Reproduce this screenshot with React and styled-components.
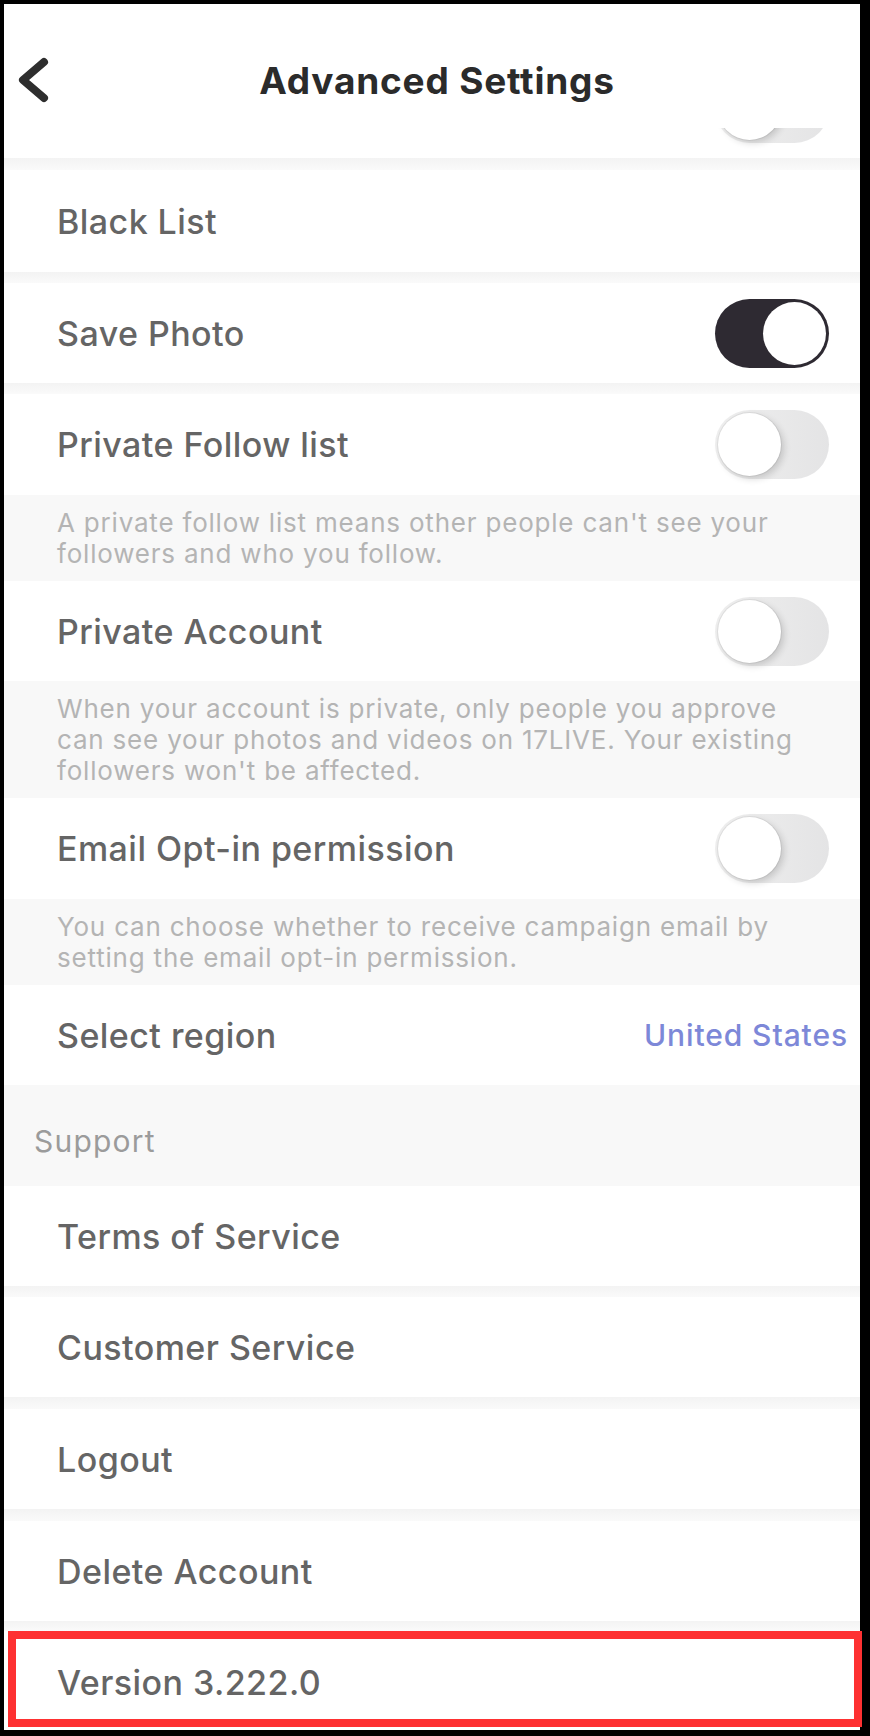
import React from "react"
import styled, { createGlobalStyle } from "styled-components"

const GlobalStyle = createGlobalStyle`
  html, body {
    margin: 0;
    padding: 0;
    background: #000;
  }
  body {
    font-family: Inter, "Noto Sans", "Liberation Sans", sans-serif;
    -webkit-font-smoothing: antialiased;
  }
`;

const privateFollowNote = [
  "A private follow list means other people can't see your",
  "followers and who you follow.",
];

const privateAccountNote = [
  "When your account is private, only people you approve",
  "can see your photos and videos on 17LIVE. Your existing",
  "followers won't be affected.",
];

const emailNote = [
  "You can choose whether to receive campaign email by",
  "setting the email opt-in permission.",
];

function Toggle({ on }) {
  return (
    <Track $on={on} role="switch" aria-checked={on}>
      <Thumb $on={on} />
    </Track>
  );
}

function Note({ lines }) {
  return (
    <NoteBox>
      {lines.map((line, i) => (
        <NoteLine key={i}>{line}</NoteLine>
      ))}
    </NoteBox>
  );
}

export default function App() {
  return (
    <>
      <GlobalStyle />
      <Frame>
        <Screen>
          <Header>
            <BackButton aria-label="Back">
              <svg width="40" height="52" viewBox="0 0 40 52">
                <path
                  d="M30 8 L9 26 L30 44"
                  fill="none"
                  stroke="#2e2e2e"
                  strokeWidth="8"
                  strokeLinecap="round"
                  strokeLinejoin="round"
                />
              </svg>
            </BackButton>
            <Title>Advanced Settings</Title>
            <span />
          </Header>

          <ScrollArea>
            <ScrollContent $offset={70}>
              <Row $h={100}>
                <span />
                <Toggle on={false} />
              </Row>
              <Gap $h={12} />
              <Row $h={102}>
                <Label>Black List</Label>
              </Row>
              <Gap $h={11} />
              <Row $h={100}>
                <Label>Save Photo</Label>
                <Toggle on />
              </Row>
              <Gap $h={11} />
              <Row $h={101}>
                <Label>Private Follow list</Label>
                <Toggle on={false} />
              </Row>
              <Note lines={privateFollowNote} />
              <Row $h={100}>
                <Label>Private Account</Label>
                <Toggle on={false} />
              </Row>
              <Note lines={privateAccountNote} />
              <Row $h={101}>
                <Label>Email Opt-in permission</Label>
                <Toggle on={false} />
              </Row>
              <Note lines={emailNote} />
              <Row $h={100}>
                <Label>Select region</Label>
                <Value>United States</Value>
              </Row>
              <SectionHeader>Support</SectionHeader>
              <Row $h={100}>
                <Label>Terms of Service</Label>
              </Row>
              <Gap $h={11} />
              <Row $h={100}>
                <Label>Customer Service</Label>
              </Row>
              <Gap $h={12} />
              <Row $h={100}>
                <Label>Logout</Label>
              </Row>
              <Gap $h={12} />
              <Row $h={100}>
                <Label>Delete Account</Label>
              </Row>
              <Gap $h={10} />
              <HighlightRow $h={98}>
                <Label>Version 3.222.0</Label>
              </HighlightRow>
            </ScrollContent>
          </ScrollArea>
        </Screen>
      </Frame>
    </>
  );
}

const Frame = styled.div`
  width: 870px;
  height: 1736px;
  box-sizing: border-box;
  padding: 4px 10px 6px 4px;
  background: #000;
`;

const Screen = styled.div`
  height: 100%;
  display: flex;
  flex-direction: column;
  background: #fff;
`;

const Header = styled.div`
  flex-shrink: 0;
  height: 124px;
  box-sizing: border-box;
  padding: 28px 0 0 10px;
  display: grid;
  grid-template-columns: 1fr auto 1fr;
  align-items: center;
  background: #fff;
`;

const BackButton = styled.button`
  width: 40px;
  height: 52px;
  padding: 0;
  border: none;
  background: transparent;
  display: flex;
  cursor: pointer;
`;

const Title = styled.h1`
  margin: 0;
  font-size: 37px;
  font-weight: 700;
  letter-spacing: 0.8px;
  color: #2b2b2b;
`;

const ScrollArea = styled.div`
  flex: 1;
  min-height: 0;
  clip-path: inset(0 -12px 0 0);
`;

const ScrollContent = styled.div`
  margin-top: -${(p) => p.$offset}px;
  display: flex;
  flex-direction: column;
`;

const Row = styled.div`
  position: relative;
  flex-shrink: 0;
  height: ${(p) => p.$h || 100}px;
  box-sizing: border-box;
  padding: 0 12px 0 53px;
  display: flex;
  align-items: center;
  justify-content: space-between;
  background: #fff;
`;

const HighlightRow = styled(Row)`
  padding-top: 4px;

  &::after {
    content: "";
    position: absolute;
    top: 0;
    left: 4px;
    right: -2px;
    bottom: 2px;
    border: 8px solid #fe3132;
    pointer-events: none;
  }
`;

const Label = styled.span`
  font-size: 34px;
  font-weight: 500;
  letter-spacing: 0.45px;
  color: #656565;
`;

const Value = styled.span`
  font-size: 30px;
  font-weight: 500;
  letter-spacing: 0.9px;
  color: #7d88d8;
`;

const Gap = styled.div`
  flex-shrink: 0;
  height: ${(p) => p.$h}px;
  background: linear-gradient(#f3f3f3, #fafafa);
`;

const NoteBox = styled.div`
  flex-shrink: 0;
  padding: 12px 20px 12px 53px;
  background: #f8f8f8;
  font-size: 26px;
  line-height: 31px;
  letter-spacing: 0.8px;
  color: #b4b4b4;
`;

const NoteLine = styled.span`
  display: block;
  white-space: nowrap;
`;

const SectionHeader = styled.div`
  flex-shrink: 0;
  height: 101px;
  box-sizing: border-box;
  padding: 10px 0 0 30px;
  display: flex;
  align-items: center;
  background: #f8f8f8;
  font-size: 30px;
  letter-spacing: 1.2px;
  color: #9b9b9b;
`;

const Track = styled.span`
  width: 114px;
  height: 69px;
  box-sizing: border-box;
  padding: 3px;
  margin-right: 19px;
  flex-shrink: 0;
  border-radius: 35px;
  display: inline-flex;
  align-items: center;
  justify-content: ${(p) => (p.$on ? "flex-end" : "flex-start")};
  background: ${(p) => (p.$on ? "#2e2a32" : "linear-gradient(90deg, #efefef, #e4e4e5)")};
`;

const Thumb = styled.span`
  width: 63px;
  height: 63px;
  border-radius: 50%;
  background: #fff;
  box-shadow: ${(p) =>
    p.$on ? "none" : "0 0 0 1px rgba(0, 0, 0, 0.06), 3px 3px 7px rgba(0, 0, 0, 0.16)"};
`;
